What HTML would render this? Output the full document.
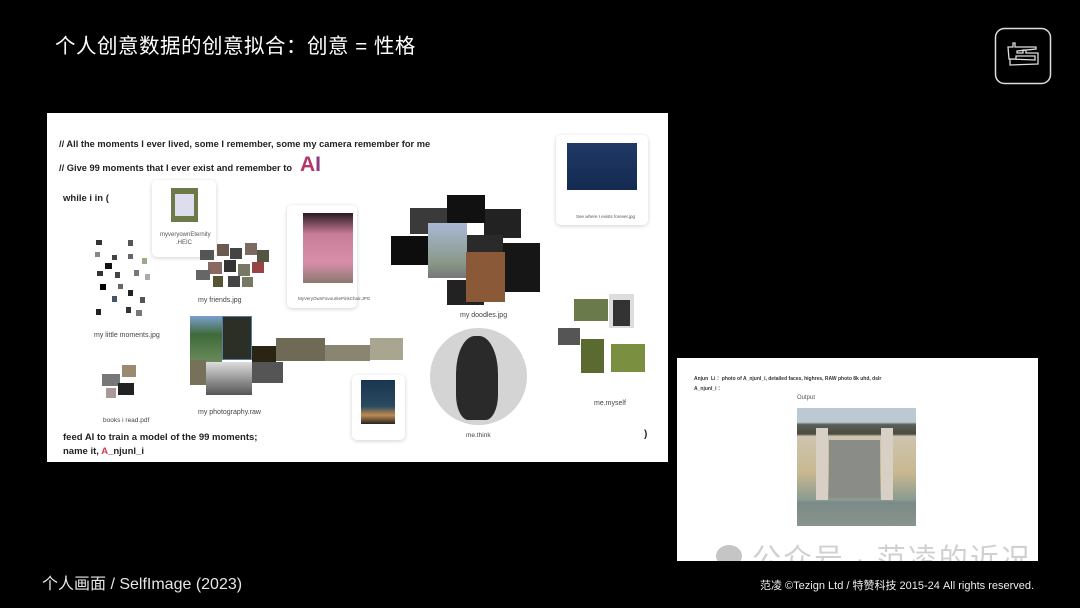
<!DOCTYPE html>
<html><head><meta charset="utf-8"><style>
*{margin:0;padding:0;box-sizing:border-box}
body{width:1080px;height:608px;background:#000;position:relative;overflow:hidden;font-family:"Liberation Sans","Noto Sans CJK SC",sans-serif}
.a{position:absolute}
.t{position:absolute;white-space:nowrap}
.card{position:absolute;background:#fff;border-radius:5px;box-shadow:0 1px 4px rgba(0,0,0,.18)}
.lb{position:absolute;font-size:6px;color:#555;white-space:nowrap}
.b{font-weight:bold;color:#222}
</style></head><body>
<div class="t" style="left:55px;top:29px;font-size:20.5px;color:#fff;letter-spacing:0.5px">个人创意数据的创意拟合：创意 = 性格</div>
<svg class="a" style="left:994px;top:27px" width="58" height="58" viewBox="0 0 58 58"><rect x="1.5" y="1.5" width="55" height="55" rx="9" fill="none" stroke="#ddd" stroke-width="1.5"/><path d="M14 20 L19 20 L19 16 L21 16 L21 20 L42 20 L42 22 L23 24 L23 26 L29 26 L29 23 L32 23 L32 26 L44 26 L44 37 L16 38 L16 32 L41 33 L41 29 L22 29 L22 32 L15 32 Z" fill="none" stroke="#ddd" stroke-width="1.3"/></svg>

<div class="a" style="left:47px;top:113px;width:621px;height:349px;background:#fff"></div>
<div class="t b" style="left:59px;top:139px;font-size:9.3px">// All the moments I ever lived, some I remember, some my camera remember for me</div>
<div class="t b" style="left:59px;top:163px;font-size:9.3px">// Give 99 moments that I ever exist and remember to</div>
<div class="t" style="left:300px;top:153px;font-size:21px;font-weight:bold;color:#b8376a">A<span style="color:#8a3a80">I</span></div>
<div class="t b" style="left:63px;top:193px;font-size:9.5px">while i in (</div>
<div class="t b" style="left:63px;top:432px;font-size:9.5px">feed AI to train a model of the 99 moments;</div>
<div class="t b" style="left:63px;top:446px;font-size:9.5px">name it, <span style="color:#d23a4a">A</span>_njunl_i</div>
<div class="t b" style="left:644px;top:429px;font-size:10px">)</div>

<div class="card" style="left:152px;top:180px;width:64px;height:77px"></div>
<div class="a" style="left:171px;top:188px;width:27px;height:34px;background:#6b7a48"></div>
<div class="a" style="left:175px;top:194px;width:19px;height:22px;background:#dde"></div>
<div class="lb" style="left:160px;top:232px">myveryownEternity</div><div class="lb" style="left:176px;top:240px">.HEIC</div>

<div class="a" style="left:200px;top:250px;width:14px;height:10px;background:#555"></div>
<div class="a" style="left:217px;top:244px;width:12px;height:12px;background:#6a5a50"></div>
<div class="a" style="left:230px;top:248px;width:12px;height:11px;background:#444"></div>
<div class="a" style="left:245px;top:243px;width:12px;height:12px;background:#7a6a60"></div>
<div class="a" style="left:257px;top:250px;width:12px;height:12px;background:#554"></div>
<div class="a" style="left:208px;top:262px;width:14px;height:12px;background:#8a6a60"></div>
<div class="a" style="left:224px;top:260px;width:12px;height:12px;background:#333"></div>
<div class="a" style="left:238px;top:264px;width:12px;height:12px;background:#776"></div>
<div class="a" style="left:252px;top:262px;width:12px;height:11px;background:#944"></div>
<div class="a" style="left:196px;top:270px;width:14px;height:10px;background:#666"></div>
<div class="a" style="left:213px;top:276px;width:10px;height:11px;background:#553"></div>
<div class="a" style="left:228px;top:276px;width:12px;height:11px;background:#444"></div>
<div class="a" style="left:242px;top:277px;width:11px;height:10px;background:#776"></div>
<div class="t" style="left:198px;top:297px;font-size:7px;color:#444">my friends.jpg</div>

<div class="card" style="left:287px;top:205px;width:70px;height:103px"></div>
<div class="a" style="left:303px;top:213px;width:50px;height:70px;background:linear-gradient(#2a1a20 0%,#c77c98 30%,#d98eaa 70%,#8a7a70 100%)"></div>
<div class="lb" style="left:298px;top:296px;font-size:4.5px">MyVeryOwnFavouritePinkChair.JPG</div>

<div class="a" style="left:410px;top:208px;width:42px;height:26px;background:#3a3a3a"></div>
<div class="a" style="left:484px;top:209px;width:37px;height:29px;background:#222"></div>
<div class="a" style="left:447px;top:195px;width:38px;height:28px;background:#111"></div>
<div class="a" style="left:391px;top:236px;width:40px;height:29px;background:#0d0d0d"></div>
<div class="a" style="left:503px;top:243px;width:37px;height:49px;background:#161616"></div>
<div class="a" style="left:466px;top:235px;width:37px;height:30px;background:#2a2a2a"></div>
<div class="a" style="left:447px;top:280px;width:37px;height:25px;background:#222"></div>
<div class="a" style="left:428px;top:223px;width:39px;height:55px;background:linear-gradient(#a9b8d4,#8a9a8a 70%,#777)"></div>
<div class="a" style="left:466px;top:252px;width:39px;height:50px;background:#8a5a38"></div>
<div class="t" style="left:460px;top:312px;font-size:7px;color:#444">my doodles.jpg</div>

<div class="card" style="left:556px;top:135px;width:92px;height:90px"></div>
<div class="a" style="left:567px;top:143px;width:70px;height:47px;background:linear-gradient(#1f3a66,#142a50)"></div>
<div class="lb" style="left:576px;top:214px;font-size:4.5px">See where I exists forever.jpg</div>

<div class="a" style="left:96px;top:240px;width:6px;height:5px;background:#333"></div>
<div class="a" style="left:128px;top:240px;width:5px;height:6px;background:#555"></div>
<div class="a" style="left:95px;top:252px;width:5px;height:5px;background:#888"></div>
<div class="a" style="left:112px;top:255px;width:5px;height:5px;background:#444"></div>
<div class="a" style="left:128px;top:254px;width:5px;height:5px;background:#666"></div>
<div class="a" style="left:142px;top:258px;width:5px;height:6px;background:#9a8"></div>
<div class="a" style="left:105px;top:263px;width:7px;height:6px;background:#111"></div>
<div class="a" style="left:97px;top:271px;width:6px;height:5px;background:#333"></div>
<div class="a" style="left:115px;top:272px;width:5px;height:6px;background:#444"></div>
<div class="a" style="left:134px;top:270px;width:5px;height:6px;background:#777"></div>
<div class="a" style="left:145px;top:274px;width:5px;height:6px;background:#aaa"></div>
<div class="a" style="left:100px;top:284px;width:6px;height:6px;background:#000"></div>
<div class="a" style="left:118px;top:284px;width:5px;height:5px;background:#666"></div>
<div class="a" style="left:128px;top:290px;width:5px;height:6px;background:#222"></div>
<div class="a" style="left:112px;top:296px;width:5px;height:6px;background:#456"></div>
<div class="a" style="left:140px;top:297px;width:5px;height:6px;background:#555"></div>
<div class="a" style="left:96px;top:309px;width:5px;height:6px;background:#222"></div>
<div class="a" style="left:126px;top:307px;width:5px;height:6px;background:#333"></div>
<div class="a" style="left:136px;top:310px;width:6px;height:6px;background:#777"></div>
<div class="t" style="left:94px;top:332px;font-size:7px;color:#444">my little moments.jpg</div>

<div class="a" style="left:190px;top:316px;width:32px;height:46px;background:linear-gradient(#7aa0d0,#3f6a3a 40%,#6a8a5a)"></div>
<div class="a" style="left:222px;top:316px;width:30px;height:44px;background:#2b2f25;border:1px solid #5a7aa0"></div>
<div class="a" style="left:252px;top:346px;width:24px;height:16px;background:#2a2412"></div>
<div class="a" style="left:276px;top:338px;width:49px;height:23px;background:#6e6a55"></div>
<div class="a" style="left:325px;top:345px;width:45px;height:16px;background:#8a8570"></div>
<div class="a" style="left:370px;top:338px;width:33px;height:22px;background:#a8a690"></div>
<div class="a" style="left:190px;top:360px;width:16px;height:25px;background:#77705a"></div>
<div class="a" style="left:206px;top:362px;width:46px;height:33px;background:linear-gradient(#ddd,#555)"></div>
<div class="a" style="left:252px;top:362px;width:31px;height:21px;background:#555"></div>
<div class="t" style="left:198px;top:409px;font-size:7px;color:#444">my photography.raw</div>

<div class="a" style="left:102px;top:374px;width:18px;height:12px;background:#777"></div>
<div class="a" style="left:122px;top:365px;width:14px;height:12px;background:#998a70"></div>
<div class="a" style="left:118px;top:383px;width:16px;height:12px;background:#222"></div>
<div class="a" style="left:106px;top:388px;width:10px;height:10px;background:#a99"></div>
<div class="t" style="left:103px;top:417px;font-size:6.5px;color:#444">books i read.pdf</div>

<div class="card" style="left:352px;top:375px;width:53px;height:65px"></div>
<div class="a" style="left:361px;top:380px;width:34px;height:44px;background:linear-gradient(#1a3550,#2a4a60 60%,#c08a50 80%,#222)"></div>

<div class="a" style="left:430px;top:328px;width:97px;height:97px;border-radius:50%;background:#d4d4d4"></div>
<div class="a" style="left:456px;top:336px;width:42px;height:84px;border-radius:45% 45% 30% 30%;background:#2a2a2a"></div>
<div class="t" style="left:466px;top:432px;font-size:6.5px;color:#444">me.think</div>

<div class="a" style="left:573px;top:298px;width:36px;height:24px;background:#6a7a4a;border:1px solid #fff"></div>
<div class="a" style="left:609px;top:294px;width:25px;height:34px;background:#ddd"></div>
<div class="a" style="left:613px;top:300px;width:17px;height:26px;background:#333"></div>
<div class="a" style="left:558px;top:328px;width:22px;height:17px;background:#555"></div>
<div class="a" style="left:580px;top:338px;width:25px;height:36px;background:#5a6a30;border:1px solid #fff"></div>
<div class="a" style="left:610px;top:343px;width:36px;height:30px;background:#7a9040;border:1px solid #fff"></div>
<div class="t" style="left:594px;top:400px;font-size:7px;color:#444">me.myself</div>

<div class="a" style="left:677px;top:358px;width:361px;height:203px;background:#fff;overflow:hidden">
  <div class="t" style="left:17px;top:17px;font-size:5px;font-weight:bold;color:#333">Anjun&nbsp; Li ：photo of A_njunl_i, detailed faces, highres, RAW photo 8k uhd, dslr</div>
  <div class="t" style="left:17px;top:27px;font-size:5px;font-weight:bold;color:#333">A_njunl_i ：</div>
  <div class="t" style="left:120px;top:37px;font-size:6px;color:#555">Output</div>
  <div class="a" style="left:120px;top:50px;width:119px;height:118px;background:linear-gradient(#bcc8d2 0,#bcc8d2 12%,#5a6058 14%,#4a4a40 22%,#cfc4b0 24%,#c8b890 55%,#8a9a90 78%,#7a8a86 80%,#8a948e 100%)"></div>
  <div class="a" style="left:139px;top:70px;width:12px;height:72px;background:#d8d0c4"></div>
  <div class="a" style="left:204px;top:70px;width:12px;height:72px;background:#d8d0c4"></div>
  <div class="a" style="left:152px;top:82px;width:51px;height:58px;background:#8a8c88"></div>
  <div class="a" style="left:39px;top:187px;width:26px;height:22px;border-radius:50%;background:rgba(140,140,140,.5)"></div>
  <div class="t" style="left:75px;top:178px;font-size:29px;color:rgba(150,150,150,.45);letter-spacing:2px">公众号 · 范凌的近况</div>
</div>

<div class="t" style="left:42px;top:570px;font-size:16px;color:#e6e6e6">个人画面 / SelfImage (2023)</div>
<div class="t" style="left:760px;top:577px;font-size:11px;color:#eee">范凌 ©Tezign Ltd / 特赞科技 2015-24 All rights reserved.</div>
</body></html>
